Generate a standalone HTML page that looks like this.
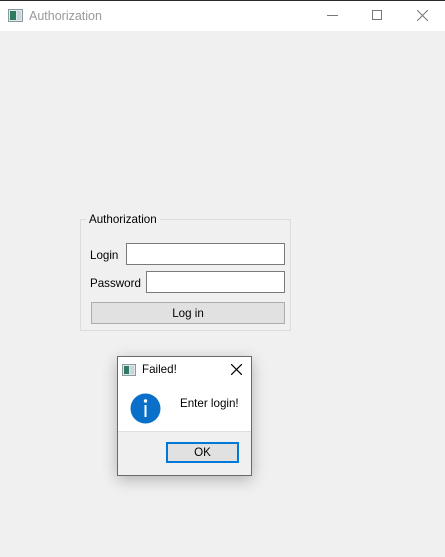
<!DOCTYPE html><html><head><style>
*{margin:0;padding:0;box-sizing:border-box}
body{width:445px;height:557px;background:#f0f0f0;position:relative;overflow:hidden;font-family:"Liberation Sans",sans-serif;font-size:11.6px;color:#000}
.a{position:absolute}
</style></head><body>
<div class="a" style="left:0;top:0;width:445px;height:1px;background:#2b2b2b"></div>
<div class="a" style="left:0;top:1px;width:445px;height:30px;background:#fff"></div>
<svg class="a" style="left:8px;top:9px" width="15" height="13"><rect x="0.5" y="0.5" width="14" height="12" fill="#dfe7ea" stroke="#8a9aa3"/><rect x="2" y="2" width="6" height="9" fill="#2d7a5e"/><rect x="9" y="2" width="4" height="9" fill="#c8d6dc"/></svg>
<div class="a" style="left:29px;top:9px;color:#999;font-size:12.5px">Authorization</div>
<div class="a" style="left:327px;top:15px;width:11px;height:1px;background:#777"></div>
<div class="a" style="left:372px;top:10px;width:10px;height:10px;border:1px solid #777"></div>
<svg class="a" style="left:417px;top:10px" width="11" height="11"><path d="M0 0L11 11M11 0L0 11" stroke="#777" stroke-width="1"/></svg>

<div class="a" style="left:80px;top:219px;width:211px;height:112px;border:1px solid #dcdcdc"></div>
<div class="a" style="left:86px;top:213px;padding:0 3px;background:#f0f0f0">Authorization</div>
<div class="a" style="left:90px;top:249px">Login</div>
<div class="a" style="left:126px;top:243px;width:159px;height:22px;border:1px solid #7a7a7a;background:#fff"></div>
<div class="a" style="left:90px;top:277px">Password</div>
<div class="a" style="left:146px;top:271px;width:139px;height:22px;border:1px solid #7a7a7a;background:#fff"></div>
<div class="a" style="left:91px;top:302px;width:194px;height:22px;border:1px solid #adadad;background:#e1e1e1;text-align:center;line-height:21px">Log in</div>

<div class="a" style="left:117px;top:356px;width:135px;height:120px;border:1px solid #6a6a6a;background:#f0f0f0;box-shadow:0 4px 14px rgba(0,0,0,.25)">
 <div class="a" style="left:0;top:0;width:133px;height:75px;background:#fff;border-bottom:1px solid #dfdfdf"></div>
 <svg class="a" style="left:4px;top:7px" width="14" height="12"><rect x="0.5" y="0.5" width="13" height="11" fill="#dfe7ea" stroke="#8a9aa3"/><rect x="2" y="2" width="5" height="8" fill="#2d7a5e"/><rect x="8" y="2" width="4" height="8" fill="#c8d6dc"/></svg>
 <div class="a" style="left:24px;top:6px">Failed!</div>
 <svg class="a" style="left:113px;top:7px" width="11" height="11"><path d="M0 0L11 11M11 0L0 11" stroke="#000" stroke-width="1.2"/></svg>
 <svg class="a" style="left:12px;top:36px" width="31" height="31"><circle cx="15.5" cy="15.5" r="15" fill="#0a6fc9"/><circle cx="15.5" cy="8" r="1.7" fill="#fff"/><rect x="14.5" y="12" width="2" height="12" fill="#fff"/></svg>
 <div class="a" style="left:62px;top:40px">Enter login!</div>
 <div class="a" style="left:48px;top:85px;width:73px;height:21px;border:2px solid #0078d7;background:#e1e1e1;text-align:center;line-height:17px">OK</div>
</div>
</body></html>
